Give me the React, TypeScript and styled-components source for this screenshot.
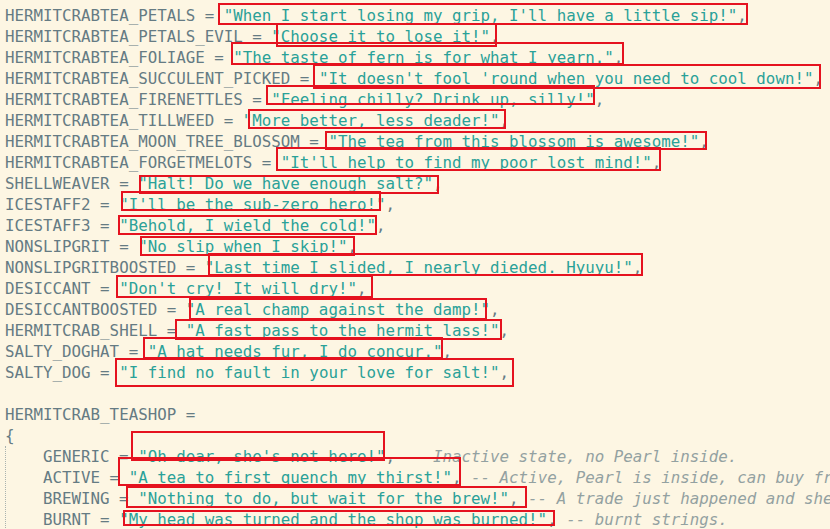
import React from "react";
import styled, { createGlobalStyle } from "styled-components";

const Global = createGlobalStyle`
  html, body {
    margin: 0;
    padding: 0;
    background: #fdf6e3;
    overflow: hidden;
  }
  #root { width: 830px; height: 529px; }
`;

const Editor = styled.div`
  position: relative;
  width: 830px;
  height: 529px;
  overflow: hidden;
  background: #fdf6e3;
  padding: 4.5px 0 0 5px;
  box-sizing: border-box;
  font-family: "DejaVu Sans Mono", "Liberation Mono", monospace;
  font-size: 15.8px;
  line-height: 21px;
  color: #657b83;
`;

const Line = styled.div`
  white-space: pre;
  height: 21px;
`;

const Str = styled.span`
  color: #2aa198;
`;

const Comment = styled.span`
  color: #93a1a1;
  font-style: italic;
`;

const Block = styled.div`
  border-left: 1px dotted #a9b3b0;
  padding-left: calc(4ch - 1px);
`;

const Mark = styled.div`
  position: absolute;
  box-sizing: border-box;
  border: 2px solid #e5121f;
  pointer-events: none;
`;

type Entry = [string, string];

const entries: Entry[] = [
  ["HERMITCRABTEA_PETALS", "When I start losing my grip, I'll have a little sip!"],
  ["HERMITCRABTEA_PETALS_EVIL", "Choose it to lose it!"],
  ["HERMITCRABTEA_FOLIAGE", "The taste of fern is for what I yearn."],
  ["HERMITCRABTEA_SUCCULENT_PICKED", "It doesn't fool 'round when you need to cool down!"],
  ["HERMITCRABTEA_FIRENETTLES", "Feeling chilly? Drink up, silly!"],
  ["HERMITCRABTEA_TILLWEED", "More better, less deader!"],
  ["HERMITCRABTEA_MOON_TREE_BLOSSOM", "The tea from this blossom is awesome!"],
  ["HERMITCRABTEA_FORGETMELOTS", "It'll help to find my poor lost mind!"],
  ["SHELLWEAVER", "Halt! Do we have enough salt?"],
  ["ICESTAFF2", "I'll be the sub-zero hero!"],
  ["ICESTAFF3", "Behold, I wield the cold!"],
  ["NONSLIPGRIT", "No slip when I skip!"],
  ["NONSLIPGRITBOOSTED", "Last time I slided, I nearly dieded. Hyuyu!"],
  ["DESICCANT", "Don't cry! It will dry!"],
  ["DESICCANTBOOSTED", "A real champ against the damp!"],
  ["HERMITCRAB_SHELL", "A fast pass to the hermit lass!"],
  ["SALTY_DOGHAT", "A hat needs fur, I do concur."],
  ["SALTY_DOG", "I find no fault in your love for salt!"],
];

type ShopEntry = [string, string, string];

const shop: ShopEntry[] = [
  ["GENERIC", "Oh dear, she's not here!", "-- Inactive state, no Pearl inside."],
  ["ACTIVE", "A tea to first quench my thirst!", "-- Active, Pearl is inside, can buy from her."],
  ["BREWING", "Nothing to do, but wait for the brew!", "-- A trade just happened and she's brewing."],
  ["BURNT", "My head was turned and the shop was burned!", "-- burnt strings."],
];

// [left, top, right, bottom] outer edges
const marks: [number, number, number, number][] = [
  [218, 3, 748, 25],
  [276, 23, 497, 47],
  [231, 42, 624, 65],
  [313, 64, 821, 89],
  [266, 85, 595, 105],
  [248, 109, 506, 129],
  [325, 131, 707, 150],
  [276, 147, 661, 171],
  [139, 175, 439, 194],
  [121, 191, 381, 211],
  [118, 215, 377, 235],
  [140, 236, 355, 256],
  [208, 253, 643, 276],
  [116, 275, 373, 298],
  [189, 298, 487, 320],
  [175, 319, 502, 340],
  [143, 337, 443, 359],
  [115, 358, 514, 387],
  [131, 431, 385, 461],
  [118, 457, 461, 486],
  [126, 486, 527, 508],
  [123, 510, 555, 526],
];

export default function App() {
  return (
    <>
      <Global />
      <Editor>
        {entries.map(([k, v]) => (
          <Line key={k}>
            {k} = <Str>"{v}"</Str>,
          </Line>
        ))}
        <Line> </Line>
        <Line>HERMITCRAB_TEASHOP =</Line>
        <Line>{"{"}</Line>
        <Block>
          {shop.map(([k, v, c]) => (
            <Line key={k}>
              {k} = <Str>"{v}"</Str>, <Comment>{c}</Comment>
            </Line>
          ))}
        </Block>
        {marks.map(([l, t, r, b], i) => (
          <Mark
            key={i}
            style={{ left: l, top: t, width: r - l, height: b - t }}
          />
        ))}
      </Editor>
    </>
  );
}
